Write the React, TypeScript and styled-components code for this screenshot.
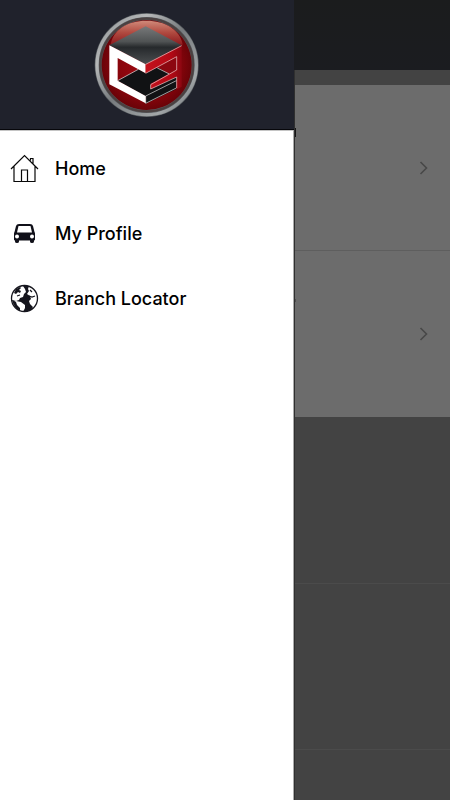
import React from "react";
import styled, { createGlobalStyle } from "styled-components";

const GlobalStyle = createGlobalStyle`
  * { box-sizing: border-box; }
  body { margin: 0; background: #434343; font-family: Inter, "Liberation Sans", sans-serif; }
`;

const Screen = styled.div`
  display: flex;
  min-height: 100vh;
`;

const Drawer = styled.aside`
  flex: 0 0 294px;
  background: #fff;
  border-right: 1px solid #aaa;
`;

const DrawerHeader = styled.header`
  display: flex;
  justify-content: center;
  align-items: center;
  height: 130px;
  margin-right: -1px;
  background: #20222c;
  border-bottom: 1px solid #07070b;
`;

const Menu = styled.nav`
  display: flex;
  flex-direction: column;
  padding-top: 5px;
  border-top: 1px solid #c4c4c4;
`;

const MenuLink = styled.a`
  display: flex;
  align-items: center;
  gap: 16px;
  height: 65px;
  padding-left: 10px;
  color: #000;
  font-size: 18px;
  font-weight: 500;
  line-height: 24px;
  text-decoration: none;
`;

const IconSlot = styled.span`
  display: flex;
  width: 29px;
  height: 29px;
`;

const Backdrop = styled.main`
  display: flex;
  flex: 1;
  flex-direction: column;
  min-width: 0;
  background: #434343;
  border-left: 1px solid #303030;
`;

const TopBar = styled.div`
  height: 70px;
  margin-left: -1px;
  background: linear-gradient(#1b1c1d, #1b1c20);
`;

const List = styled.div`
  display: flex;
  flex: 1;
  flex-direction: column;
  padding-top: 15px;
`;

const Row = styled.div<{ $divider?: boolean }>`
  display: flex;
  align-items: center;
  justify-content: space-between;
  height: 166px;
  padding-right: 22px;
  color: #484848;
  background: #6c6c6c;
  border-bottom: ${(p) => (p.$divider ? "1px solid #5e5e5e" : "none")};
`;

const EmptyRow = styled.div<{ $fill?: boolean }>`
  height: ${(p) => (p.$fill ? "auto" : "166px")};
  flex: ${(p) => (p.$fill ? "1" : "none")};

  & + & {
    border-top: 1px solid #4b4b4b;
  }
`;

const TitleEdge = styled.svg<{ $top: number }>`
  align-self: flex-start;
  margin-top: ${(p) => p.$top}px;
`;

const RowButton = styled.button`
  display: flex;
  margin-left: auto;
  padding: 0;
  border: 0;
  background: none;
  color: inherit;
`;

const Logo = () => (
  <svg width="114" height="114" viewBox="0 0 342 342" role="img" aria-label="C3 logo">
    <defs>
      <linearGradient id="rim" x1="0" y1="0" x2="1" y2="1">
        <stop offset="0" stopColor="#8d9193" />
        <stop offset=".25" stopColor="#b5b7b8" />
        <stop offset=".5" stopColor="#777b7e" />
        <stop offset=".8" stopColor="#a2a6a8" />
        <stop offset="1" stopColor="#62676a" />
      </linearGradient>
      <radialGradient id="red">
        <stop offset="0" stopColor="#a00a12" />
        <stop offset=".75" stopColor="#85040b" />
        <stop offset="1" stopColor="#6a0308" />
      </radialGradient>
      <linearGradient id="gloss" x1="0" y1="0" x2="0" y2="1">
        <stop offset="0" stopColor="#d08a7a" />
        <stop offset=".5" stopColor="#b04a40" />
        <stop offset="1" stopColor="#8c1a1e" />
      </linearGradient>
      <linearGradient id="lid" x1="0" y1="0" x2="0" y2="1">
        <stop offset="0" stopColor="#77797a" />
        <stop offset=".4" stopColor="#505354" />
        <stop offset=".55" stopColor="#26292c" />
        <stop offset="1" stopColor="#4b4e50" />
      </linearGradient>
      <linearGradient id="side" x1="0" y1="0" x2="1" y2="0">
        <stop offset="0" stopColor="#c5121d" />
        <stop offset=".7" stopColor="#b30915" />
        <stop offset="1" stopColor="#8c0711" />
      </linearGradient>
    </defs>
    <circle cx="170" cy="171" r="156" fill="#585d61" />
    <circle cx="170" cy="171" r="149" fill="none" stroke="url(#rim)" strokeWidth="10" />
    <circle cx="170" cy="171" r="139" fill="none" stroke="#4b4141" strokeWidth="7" />
    <circle cx="170" cy="171" r="135" fill="url(#red)" />
    <path d="M62 110C68 66 112 38 169 38s102 28 109 72Z" fill="url(#gloss)" />
    <path d="M58 112 167 55l108 57-108 57Z" fill="url(#lid)" />
    <path d="m83 218 62-34 22 12 36-18 56 28v37l-92 44v-22Z" fill="#111214" />
    <path d="m167 196 93-50v40l-22 12-36-20Z" fill="#8c0710" />
    <path d="m83 218 62-34M202 180l36 18" fill="none" stroke="#eee" strokeWidth="2" />
    <path d="m58 112 109 57v27l-84-46v68l84 46v22L58 229Z" fill="#fff" />
    <path d="m167 169 108-57v124l-15 8v-38l-78 38v-17l78-42v-39l-93 50Z" fill="url(#side)" />
    <path
      d="m167 169 108-56M167 196l93-50v40l-78 44v13l78-36v33"
      fill="none"
      stroke="#eed2d2"
      strokeWidth="2"
    />
    <path d="m167 264 92-46M167 286l92-46M167 264v22" fill="none" stroke="#e4e4e4" strokeWidth="2" />
  </svg>
);

const HouseIcon = () => (
  <svg width="29" height="29" viewBox="0 0 29 29" fill="none" stroke="#080808" strokeWidth="1.2" aria-hidden="true">
    <path d="M1 15 14.500 1.500 28 15M4 12.500V27.500h21V12.500M11.500 27.500V16h6v11.500M20.500 6.500V4.500h2.500V10" />
  </svg>
);

const CarIcon = () => (
  <svg width="29" height="29" viewBox="0 0 29 29" aria-hidden="true">
    <path
      fillRule="evenodd"
      fill="#101019"
      d="M9 5h11q2.500 0 3 2l1.500 6q.5.500.5 1.500v6q0 1-1 1v1q0 1.500-2 1.500t-2-1.500v-1H9v1q0 1.500-2 1.500t-2-1.500v-1q-1 0-1-1v-6q0-1 .5-1.500L6 7q.5-2 3-2Zm-.5 2L7 13.500h15L20.500 7ZM7 15.500a2 2 0 1 0 0 4 2 2 0 0 0 0-4Zm15 0a2 2 0 1 0 0 4 2 2 0 0 0 0-4Z"
    />
  </svg>
);

const GlobeIcon = () => (
  <svg width="29" height="29" viewBox="0 0 29 29" aria-hidden="true">
    <circle cx="14.500" cy="14.500" r="13" fill="#fff" stroke="#15151d" strokeWidth="1.300" />
    <path
      fill="#15151d"
      d="M13 2h6l-1 3 1 2-2 3 3 2 1 3-2 2 1 3 3 3-2 3-5 2h-3l2-4v-3l-4-3-5-1-3 1-1-2 4 1 3-1 1-2 3-1 1-3 2-2-1-3Z"
    />
    <path fill="#15151d" d="m2 16 4 2 1 3 3 3v3Q4 24 2 16Z" />
    <path fill="#15151d" d="m6 5 4-2 1 1-2 2 2 1-1 2-2-1-2 2-2-1Z" />
    <path fill="none" stroke="#15151d" strokeWidth="1.300" d="m19 12 3 1 3-1M20 6l2 2M7 12l3-1" />
  </svg>
);

const items = [
  { label: "Home", Icon: HouseIcon },
  { label: "My Profile", Icon: CarIcon },
  { label: "Branch Locator", Icon: GlobeIcon },
];

const Chevron = ({ label }: { label: string }) => (
  <RowButton aria-label={label}>
    <svg width="9" height="14" viewBox="0 0 9 14" fill="none" stroke="currentColor" strokeWidth="1.600" aria-hidden="true">
      <path d="m1.500 1 6 6-6 6" />
    </svg>
  </RowButton>
);

export default function App() {
  return (
    <>
      <GlobalStyle />
      <Screen>
        <Drawer>
          <DrawerHeader>
            <Logo />
          </DrawerHeader>
          <Menu aria-label="Main">
            {items.map(({ label, Icon }) => (
              <MenuLink href="#" key={label}>
                <IconSlot>
                  <Icon />
                </IconSlot>
                {label}
              </MenuLink>
            ))}
          </Menu>
        </Drawer>
        <Backdrop>
          <TopBar />
          <List>
            <Row $divider>
              <TitleEdge $top={42} width="1" height="11" viewBox="0 0 1 11" aria-hidden="true">
                <path d="M0 1v9" stroke="#161616" strokeWidth="2" />
              </TitleEdge>
              <Chevron label="Open first entry" />
            </Row>
            <Row>
              <TitleEdge $top={47} width="1" height="4" viewBox="0 0 1 4" aria-hidden="true">
                <path d="M0 1v3" stroke="#505050" strokeWidth="2" />
              </TitleEdge>
              <Chevron label="Open second entry" />
            </Row>
            <EmptyRow />
            <EmptyRow />
            <EmptyRow $fill />
          </List>
        </Backdrop>
      </Screen>
    </>
  );
}
